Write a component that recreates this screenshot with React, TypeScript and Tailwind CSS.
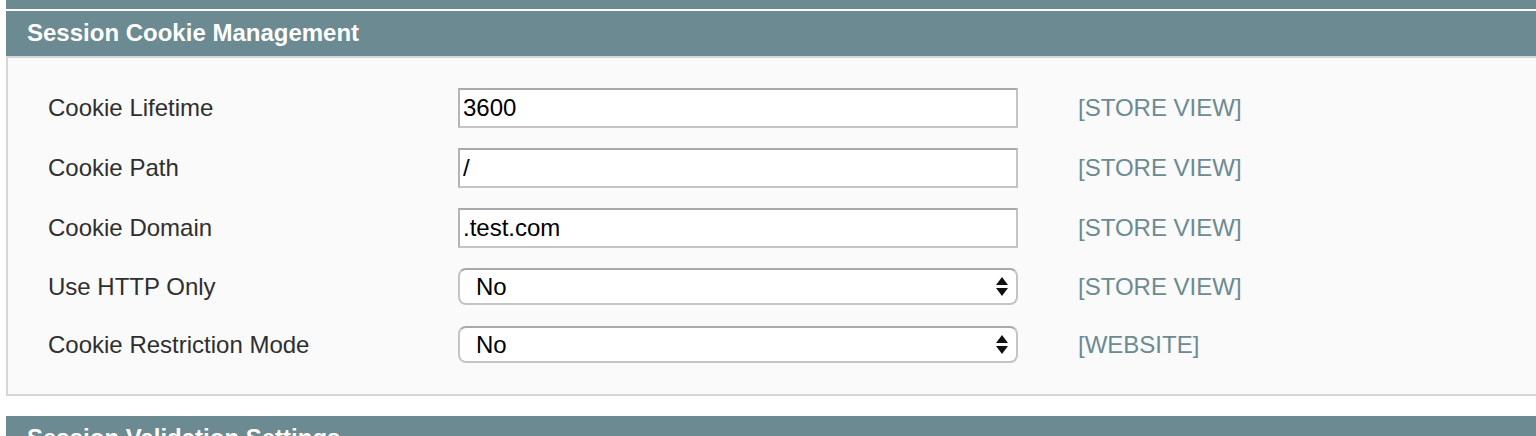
const fields = [
    { label: "Cookie Lifetime", value: "3600", scope: "[STORE VIEW]", kind: "input" },
    { label: "Cookie Path", value: "/", scope: "[STORE VIEW]", kind: "input" },
    { label: "Cookie Domain", value: ".test.com", scope: "[STORE VIEW]", kind: "input" },
    { label: "Use HTTP Only", value: "No", scope: "[STORE VIEW]", kind: "select" },
    { label: "Cookie Restriction Mode", value: "No", scope: "[WEBSITE]", kind: "select" },
];

function SelectArrows() {
    return (
        <svg width="12" height="20" viewBox="0 0 12 20" className="shrink-0">
            <path d="M6 0 L12 8 L0 8 Z" fill="#111" />
            <path d="M0 11 L12 11 L6 19 Z" fill="#111" />
        </svg>
    );
}

function SectionHeader({ title }: { title: string }) {
    return (
        <div className="h-[45px] bg-[#6c8a91] flex items-center pl-[21px] pb-[1px]">
            <h2 className="text-white text-[24px] font-bold leading-none">{title}</h2>
        </div>
    );
}

export default function App() {
    return (
        <div className="w-[1536px] h-[436px] overflow-hidden bg-white pl-[6px] font-['Liberation_Sans',Arial,sans-serif]">
            <div className="w-[1540px]">
                <div className="h-[9px] bg-[#6c8a91]" />
                <div className="mt-[2px]">
                    <SectionHeader title="Session Cookie Management" />
                </div>

                <div className="bg-[#fafafa] border-2 border-[#d6d6d6] pt-[30px] pb-[31px] pl-[40px] h-[340px]">
                    {fields.map((f, i) => (
                        <div
                            key={f.label}
                            className={
                                "flex items-center " +
                                (f.kind === "input" ? "h-[40px] " : "h-[37px] ") +
                                (i === 3 ? "mt-[20px]" : i === 4 ? "mt-[21px]" : i > 0 ? "mt-[20px]" : "")
                            }
                        >
                            <label className="w-[410px] text-[24px] text-[#2f2f2f] leading-none">{f.label}</label>
                            {f.kind === "input" ? (
                                <input
                                    readOnly
                                    defaultValue={f.value}
                                    className="w-[560px] h-[40px] bg-white border-2 border-[#c4c4c4] border-t-[#a9a9a9] border-l-[#b4b4b4] px-[3px] text-[24px] text-black outline-none"
                                />
                            ) : (
                                <div className="w-[560px] h-[37px] bg-white border-2 border-[#c4c4c4] border-t-[#a9a9a9] rounded-[8px] flex items-center justify-between pl-[16px] pr-[8px] text-[24px] text-black leading-none">
                                    <span>{f.value}</span>
                                    <SelectArrows />
                                </div>
                            )}
                            <span className="ml-[60px] text-[24px] text-[#6c8a91] leading-none">{f.scope}</span>
                        </div>
                    ))}
                </div>

                <div className="mt-[20px]">
                    <SectionHeader title="Session Validation Settings" />
                </div>
            </div>
        </div>
    );
}
